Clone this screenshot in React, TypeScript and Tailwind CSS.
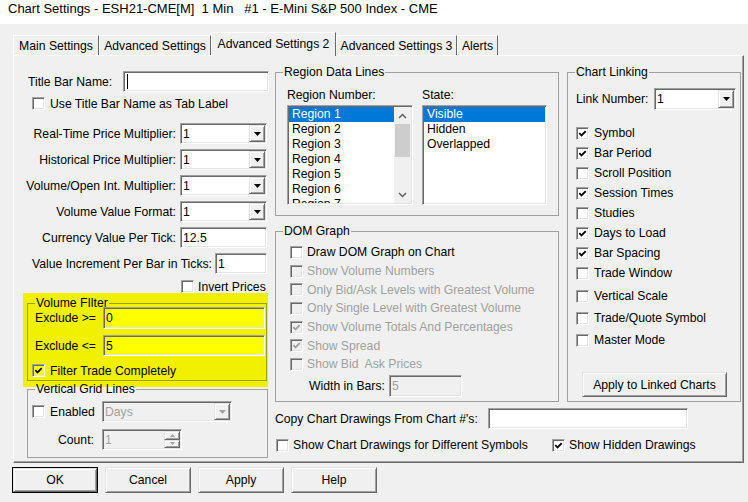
import React from "react";

// classic win32 3d edges
const sunken =
  "border border-t-[#a0a0a0] border-l-[#a0a0a0] border-b-white border-r-white shadow-[inset_1px_1px_0_#696969,inset_-1px_-1px_0_#e3e3e3]";
const raised =
  "border border-t-[#e3e3e3] border-l-[#e3e3e3] border-b-[#696969] border-r-[#696969] shadow-[inset_1px_1px_0_#fff,inset_-1px_-1px_0_#a0a0a0]";

type CheckProps = { checked?: boolean; disabled?: boolean; bg?: string };

const Check = ({ checked = false, disabled = false, bg = "bg-white" }: CheckProps) => (
  <span
    className={`flex w-[13px] h-[13px] shrink-0 items-center justify-center ${sunken} ${
      disabled ? "bg-[#f0f0f0]" : bg
    }`}
  >
    {checked && (
      <svg width="9" height="9" viewBox="0 0 9 9" className="block">
        <path
          d="M1.3 4.2 3.5 6.4 7.7 2.1"
          fill="none"
          stroke={disabled ? "#a0a0a0" : "#000"}
          strokeWidth="1.8"
        />
      </svg>
    )}
  </span>
);

const CheckRow = ({
  label,
  checked,
  disabled,
  className = "",
  gap = "gap-[5px]",
  bg,
}: CheckProps & { label: string; className?: string; gap?: string }) => (
  <div className={`flex items-center ${gap} ${className}`}>
    <Check checked={checked} disabled={disabled} bg={bg} />
    <span className={`whitespace-pre ${disabled ? "text-[#a0a0a0]" : ""}`}>{label}</span>
  </div>
);

const DownArrow = ({ color = "#000" }: { color?: string }) => (
  <svg width="7" height="4" viewBox="0 0 7 4" className="block">
    <path d="M0 0h7L3.5 4z" fill={color} />
  </svg>
);

type FieldProps = {
  value?: string;
  className?: string;
  disabled?: boolean;
  bg?: string;
};

const Combo = ({ value = "", className = "", disabled = false, bg = "bg-white" }: FieldProps) => (
  <div
    className={`flex ${sunken} ${disabled ? "bg-[#f0f0f0] text-[#a0a0a0]" : bg} ${className}`}
  >
    <span className="flex flex-1 items-center pl-[2px]">{value}</span>
    <span
      className={`my-[1px] mr-[1px] flex w-[16px] items-center justify-center bg-[#f0f0f0] ${raised}`}
    >
      <DownArrow color={disabled ? "#a0a0a0" : "#000"} />
    </span>
  </div>
);

const Edit = ({
  value = "",
  className = "",
  disabled = false,
  bg = "bg-white",
  caret = false,
}: FieldProps & { caret?: boolean }) => (
  <div
    className={`flex items-center pl-[2px] ${sunken} ${
      disabled ? "bg-[#f0f0f0] text-[#a0a0a0]" : bg
    } ${className}`}
  >
    {caret && <span className="ml-[1px] h-[15px] w-px bg-black" />}
    {value}
  </div>
);

const Button = ({ label, className = "", def = false }: { label: string; className?: string; def?: boolean }) => (
  <div className={`flex ${def ? "border border-black" : ""} ${className}`}>
    <div className={`flex flex-1 items-center justify-center bg-[#f0f0f0] ${raised}`}>{label}</div>
  </div>
);

const Group = ({
  title,
  className = "",
  legend = "leading-[14px]",
  children,
}: {
  title: string;
  className?: string;
  legend?: string;
  children: React.ReactNode;
}) => (
  <fieldset className={`border border-[#a0a0a0] p-0 ${className}`}>
    <legend className={`ml-[7px] px-[1px] ${legend}`}>{title}</legend>
    {children}
  </fieldset>
);

const Chevron = ({ up }: { up?: boolean }) => (
  <svg width="9" height="6" viewBox="0 0 9 6" className="block">
    <path
      d={up ? "M1 5 4.5 1.5 8 5" : "M1 1 4.5 4.5 8 1"}
      fill="none"
      stroke="#606060"
      strokeWidth="1.5"
    />
  </svg>
);

const regions = ["Region 1", "Region 2", "Region 3", "Region 4", "Region 5", "Region 6", "Region 7"];
const states = ["Visible", "Hidden", "Overlapped"];

const domItems = [
  { label: "Draw DOM Graph on Chart", checked: false, disabled: false },
  { label: "Show Volume Numbers", checked: false, disabled: true },
  { label: "Only Bid/Ask Levels with Greatest Volume", checked: false, disabled: true },
  { label: "Only Single Level with Greatest Volume", checked: false, disabled: true },
  { label: "Show Volume Totals And Percentages", checked: true, disabled: true },
  { label: "Show Spread", checked: true, disabled: true },
  { label: "Show Bid  Ask Prices", checked: false, disabled: true },
];

const linkItems = [
  { label: "Symbol", checked: true },
  { label: "Bar Period", checked: true },
  { label: "Scroll Position", checked: false },
  { label: "Session Times", checked: true },
  { label: "Studies", checked: false },
  { label: "Days to Load", checked: true },
  { label: "Bar Spacing", checked: true },
  { label: "Trade Window", checked: false },
];

const linkItems2 = [
  { label: "Vertical Scale", checked: false },
  { label: "Trade/Quote Symbol", checked: false },
  { label: "Master Mode", checked: false },
];

const multipliers = [
  "Real-Time Price Multiplier:",
  "Historical Price Multiplier:",
  "Volume/Open Int. Multiplier:",
  "Volume Value Format:",
];

const tabs = [
  { label: "Main Settings", w: "w-[86px]" },
  { label: "Advanced Settings", w: "w-[112px]" },
  { label: "Advanced Settings 2", w: "w-[125px]", active: true },
  { label: "Advanced Settings 3", w: "w-[121px]" },
  { label: "Alerts", w: "w-[41px]" },
];

export default function App() {
  return (
    <div className="h-[502px] w-[748px] overflow-hidden bg-[#f0f0f0] font-['Liberation_Sans',Arial,sans-serif] text-[12.2px] leading-[14px] text-black">
      {/* title bar */}
      <div className="h-[24px] whitespace-pre bg-white pl-[8px] pt-[2px] text-[13px]">
        Chart Settings - ESH21-CME[M]  1 Min   #1 - E-Mini S&amp;P 500 Index - CME
      </div>

      {/* tabs */}
      <div className="mt-[8px] flex h-[23px] items-end pl-[13px]">
        {tabs.map((t) =>
          t.active ? (
            <div
              key={t.label}
              className={`relative z-10 mb-[-1px] flex h-[24px] items-start justify-center border-l border-t border-r border-l-white border-t-white border-r-[#696969] bg-[#f0f0f0] pt-[4px] ${t.w}`}
            >
              {t.label}
            </div>
          ) : (
            <div
              key={t.label}
              className={`flex h-[20px] items-center justify-center border-l border-t border-r border-l-white border-t-white border-r-[#696969] ${t.w}`}
            >
              {t.label}
            </div>
          ),
        )}
      </div>

      {/* tab panel */}
      <div className="ml-[13px] flex h-[408px] w-[731px] border border-t-white border-l-white border-b-[#696969] border-r-[#696969] pl-[9px] shadow-[inset_-1px_-1px_0_#a0a0a0]">
        {/* left column */}
        <div className="flex w-[246px] flex-col pt-[15px]">
          <div className="flex h-[21px] items-center">
            <span className="pl-[5px]">Title Bar Name:</span>
            <Edit caret className="ml-auto h-[21px] w-[146px]" />
          </div>
          <CheckRow label="Use Title Bar Name as Tab Label" className="mt-[5px] h-[13px] pl-[9px]" />

          <div className="mt-[13px] flex flex-col gap-[5px]">
            {multipliers.map((m) => (
              <div key={m} className="flex h-[21px] items-center justify-end gap-[4px] pr-[2px]">
                <span>{m}</span>
                <Combo value="1" className="h-[21px] w-[87px]" />
              </div>
            ))}
            <div className="flex h-[21px] items-center justify-end gap-[4px] pr-[2px]">
              <span>Currency Value Per Tick:</span>
              <Edit value="12.5" className="h-[21px] w-[87px]" />
            </div>
            <div className="flex h-[21px] items-center justify-end gap-[3px] pr-[2px]">
              <span>Value Increment Per Bar in Ticks:</span>
              <Edit value="1" className="h-[21px] w-[52px]" />
            </div>
          </div>

          <CheckRow label="Invert Prices" gap="gap-[4px]" className="mt-[6px] h-[13px] pl-[158px]" />

          {/* highlighted volume filter */}
          <div className="h-[94px] w-[245px] bg-[#f0f000] pt-[4px]">
            <Group title="Volume FIlter" legend="leading-[12px]" className="ml-[4px] w-[240px] border-[#a0a000]">
              <div className="mt-[-2px] flex h-[22px] items-center pr-[1px]">
                <span className="pl-[7px]">Exclude &gt;=</span>
                <Edit value="0" bg="bg-[#ffff00]" className="ml-auto h-[22px] w-[162px]" />
              </div>
              <div className="mt-[6px] flex h-[21px] items-center pr-[1px]">
                <span className="pl-[7px]">Exclude &lt;=</span>
                <Edit value="5" bg="bg-[#ffff00]" className="ml-auto h-[21px] w-[162px]" />
              </div>
              <CheckRow
                label="Filter Trade Completely"
                checked
                bg="bg-[#ffff00]"
                className="mt-[8px] mb-[3px] h-[13px] pl-[4px]"
              />
            </Group>
          </div>

          <Group title="Vertical Grid Lines" legend="leading-[12px]" className="mt-[-4px] ml-[4px] w-[241px]">
            <div className="mt-[6px] grid h-[21px] grid-cols-[74px_auto] items-center">
              <CheckRow label="Enabled" className="pl-[4px]" />
              <Combo value="Days" disabled className="h-[21px] w-[130px]" />
            </div>
            <div className="mt-[7px] mb-[7px] grid h-[21px] grid-cols-[74px_auto] items-center">
              <span className="pl-[30px]">Count:</span>
              <div className={`flex h-[21px] w-[80px] bg-[#f0f0f0] text-[#a0a0a0] ${sunken}`}>
                <span className="flex flex-1 items-center pl-[2px]">1</span>
                <span className="my-[1px] mr-[1px] flex w-[16px] flex-col">
                  <span className={`flex flex-1 items-center justify-center bg-[#f0f0f0] ${raised}`}>
                    <svg width="5" height="3" viewBox="0 0 5 3" className="block">
                      <path d="M0 3h5L2.5 0z" fill="#a0a0a0" />
                    </svg>
                  </span>
                  <span className={`flex flex-1 items-center justify-center bg-[#f0f0f0] ${raised}`}>
                    <svg width="5" height="3" viewBox="0 0 5 3" className="block">
                      <path d="M0 0h5L2.5 3z" fill="#a0a0a0" />
                    </svg>
                  </span>
                </span>
              </div>
            </div>
          </Group>
        </div>

        {/* middle + right */}
        <div className="ml-[6px] flex w-[467px] flex-col pt-[9px]">
          <div className="flex">
            <div className="flex w-[284px] flex-col">
              <Group title="Region Data Lines">
                <div className="mt-[9px] grid h-[14px] grid-cols-[135px_auto] pl-[11px]">
                  <span>Region Number:</span>
                  <span>State:</span>
                </div>
                <div className="mt-[3px] mb-[10px] grid grid-cols-[135px_auto] pl-[11px]">
                  <div className={`flex h-[100px] w-[126px] overflow-hidden bg-white p-[1px] ${sunken}`}>
                    <div className="flex-1 overflow-hidden">
                      {regions.map((r, i) => (
                        <div
                          key={r}
                          className={`h-[15px] pl-[3px] leading-[15px] ${i === 0 ? "bg-[#0078d7] text-white" : ""}`}
                        >
                          {r}
                        </div>
                      ))}
                    </div>
                    <div className="flex w-[17px] flex-col bg-[#f0f0f0]">
                      <div className="flex h-[17px] items-center justify-center">
                        <Chevron up />
                      </div>
                      <div className="mx-[1px] h-[33px] bg-[#cdcdcd]" />
                      <div className="flex-1" />
                      <div className="flex h-[17px] items-center justify-center">
                        <Chevron />
                      </div>
                    </div>
                  </div>
                  <div className={`h-[100px] w-[125px] overflow-hidden bg-white p-[1px] ${sunken}`}>
                    {states.map((s, i) => (
                      <div
                        key={s}
                        className={`h-[15px] pl-[3px] leading-[15px] ${i === 0 ? "bg-[#0078d7] text-white" : ""}`}
                      >
                        {s}
                      </div>
                    ))}
                  </div>
                </div>
              </Group>

              <Group title="DOM Graph" className="mt-[8px]">
                <div className="mt-[5px] flex flex-col">
                  {domItems.map((d) => (
                    <CheckRow
                      key={d.label}
                      label={d.label}
                      checked={d.checked}
                      disabled={d.disabled}
                      gap="gap-[4px]"
                      className="h-[18.7px] pl-[14px]"
                    />
                  ))}
                </div>
                <div className="mt-[1px] mb-[4px] grid h-[22px] grid-cols-[80px_auto] items-center pl-[33px]">
                  <span>Width in Bars:</span>
                  <Edit value="5" disabled className="h-[22px] w-[73px]" />
                </div>
              </Group>
            </div>

            <Group title="Chart Linking" className="ml-[8px] w-[174px]">
              <div className="mt-[9px] grid h-[22px] grid-cols-[78px_auto] items-center pl-[8px]">
                <span>Link Number:</span>
                <Combo value="1" className="h-[22px] w-[82px]" />
              </div>
              <div className="mt-[13px] flex flex-col">
                {linkItems.map((l) => (
                  <CheckRow key={l.label} label={l.label} checked={l.checked} className="h-[20px] pl-[8px]" />
                ))}
              </div>
              <div className="mt-[2px] flex flex-col">
                {linkItems2.map((l) => (
                  <CheckRow key={l.label} label={l.label} checked={l.checked} className="h-[22px] pl-[8px]" />
                ))}
              </div>
              <Button label="Apply to Linked Charts" className="mt-[21px] mb-[4px] ml-[14px] h-[25px] w-[145px]" />
            </Group>
          </div>

          <div className="mt-[6px] grid h-[21px] grid-cols-[213px_auto] items-center">
            <span>Copy Chart Drawings From Chart #'s:</span>
            <Edit className="h-[21px] w-[200px]" />
          </div>
          <div className="mt-[9px] grid h-[13px] grid-cols-[277px_auto] items-center">
            <CheckRow label="Show Chart Drawings for Different Symbols" gap="gap-[4px]" className="pl-[1px]" />
            <CheckRow label="Show Hidden Drawings" checked gap="gap-[4px]" />
          </div>
        </div>
      </div>

      {/* dialog buttons */}
      <div className="mt-[4px] flex gap-[7px] pl-[12px]">
        <Button label="OK" def className="h-[26px] w-[86px]" />
        <Button label="Cancel" className="h-[26px] w-[86px]" />
        <Button label="Apply" className="h-[26px] w-[86px]" />
        <Button label="Help" className="h-[26px] w-[86px]" />
      </div>
    </div>
  );
}
